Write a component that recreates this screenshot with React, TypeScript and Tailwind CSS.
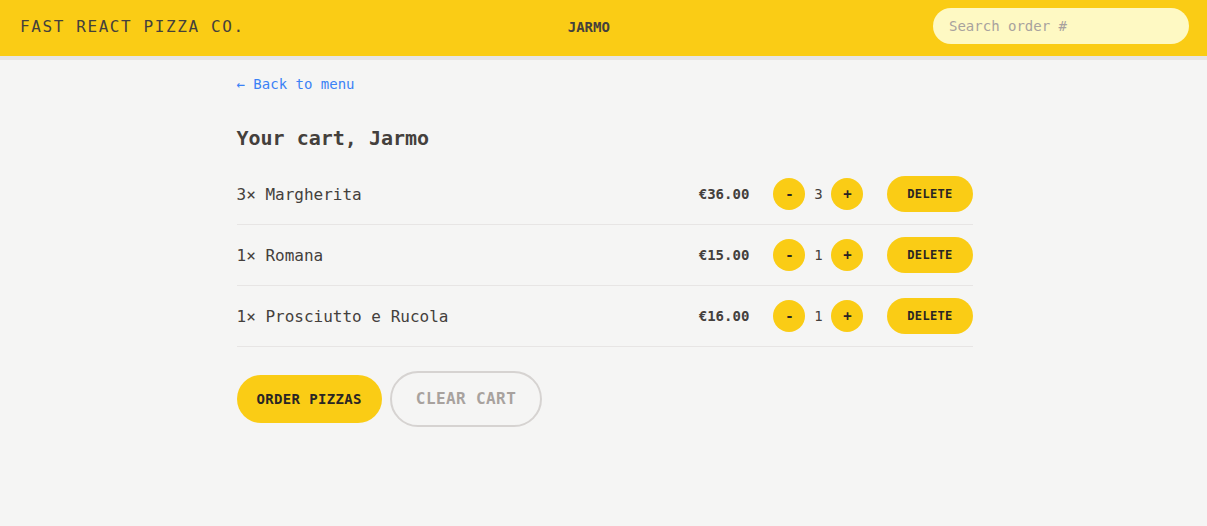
const items = [
  { id: 1, name: 'Margherita', qty: 3, total: 36 },
  { id: 2, name: 'Romana', qty: 1, total: 15 },
  { id: 3, name: 'Prosciutto e Rucola', qty: 1, total: 16 },
];

const mono = "font-['DejaVu_Sans_Mono','Liberation_Mono',monospace]";

function formatCurrency(n: number) {
  return `€${n.toFixed(2)}`;
}

function Header() {
  return (
    <header className="flex items-center justify-between bg-[#facc15] pl-5 pr-[18px] pt-2 pb-3 uppercase border-b-4 border-[#e7e5e4]">
      <a href="#" className="pt-0.5 tracking-widest">Fast React Pizza Co.</a>
      <div className="pt-0.5 text-sm font-semibold">Jarmo</div>
      <input
        placeholder="Search order #"
        className="w-64 rounded-full bg-[#fef9c3] px-4 py-2 text-sm placeholder:text-[#a8a29e] placeholder:normal-case outline-none"
      />
    </header>
  );
}

function RoundButton({ children }: { children: string }) {
  return (
    <button className="flex h-8 w-8 items-center justify-center rounded-full bg-[#facc15] text-sm font-semibold text-[#292524]">
      {children}
    </button>
  );
}

function CartItem({ item }: { item: (typeof items)[number] }) {
  return (
    <li className="flex items-center justify-between py-3">
      <p className="pt-px">
        {item.qty}× {item.name}
      </p>
      <div className="flex items-center gap-6">
        <p className="text-sm font-bold">{formatCurrency(item.total)}</p>
        <div className="flex items-center gap-2">
          <RoundButton>-</RoundButton>
          <span className="w-[10px] text-center text-sm font-medium">{item.qty}</span>
          <RoundButton>+</RoundButton>
        </div>
        <button className="rounded-full bg-[#facc15] px-5 py-2.5 text-xs font-semibold uppercase tracking-wide text-[#292524]">
          Delete
        </button>
      </div>
    </li>
  );
}

export default function App() {
  return (
    <div className={`min-h-screen bg-[#f5f5f4] text-[#44403c] ${mono}`}>
      <Header />
      <main className="mx-auto max-w-3xl py-3 pl-[17px] pr-[15px]">
        <div>
          <a href="#" className="text-sm text-[#3b82f6]">
            ← Back to menu
          </a>
        </div>
        <h2 className="mt-7 text-xl font-semibold">Your cart, Jarmo</h2>
        <ul className="mt-3 divide-y divide-[#e7e5e4] border-b border-[#e7e5e4]">
          {items.map((item) => (
            <CartItem key={item.id} item={item} />
          ))}
        </ul>
        <div className="mt-6 flex items-center gap-2">
          <button className="rounded-full bg-[#facc15] px-5 py-3.5 text-sm font-semibold uppercase tracking-wide text-[#292524]">
            Order pizzas
          </button>
          <button className="rounded-full border-2 border-[#d6d3d1] px-6 py-3.5 text-base font-semibold uppercase tracking-wide text-[#a8a29e]">
            Clear cart
          </button>
        </div>
      </main>
    </div>
  );
}
